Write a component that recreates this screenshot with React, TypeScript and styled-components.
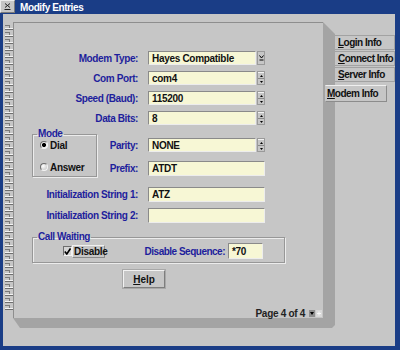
import React from "react";
import styled, { createGlobalStyle, css } from "styled-components";

const GlobalStyle = createGlobalStyle`
  html, body {
    margin: 0;
    padding: 0;
    background: #c6c6c6;
  }
  body {
    font-family: "Liberation Sans", Arial, sans-serif;
  }
`;

const Window = styled.div`
  width: 400px;
  height: 350px;
  display: flex;
  flex-direction: column;
  background: #1a3d86;
`;

const TitleBar = styled.div`
  height: 14px;
  display: flex;
  align-items: center;
  flex-shrink: 0;
`;

const MenuBox = styled.div`
  width: 15px;
  height: 13px;
  box-sizing: border-box;
  background: #c6c6c6;
  border: 1px solid;
  border-color: #ececec #7a7a7a #7a7a7a #ececec;
  display: flex;
  align-items: center;
  justify-content: center;
  align-self: flex-start;
`;

const Title = styled.div`
  margin-left: 5px;
  color: #ffffff;
  font-size: 10px;
  font-weight: bold;
  letter-spacing: -0.4px;
`;

const Frame = styled.div`
  flex: 1;
  display: flex;
  padding: 0 5px 4px 3px;
`;

const Body = styled.div`
  flex: 1;
  display: flex;
  align-items: flex-start;
  background: #c6c6c6;
  padding-top: 8px;
`;

const Spiral = styled.svg`
  width: 10px;
  height: 288px;
  margin-top: 3px;
  flex-shrink: 0;
`;

const Stack = styled.div`
  width: 322px;
  height: 306px;
  flex-shrink: 0;
  background: #a4a4a4;
  clip-path: polygon(0 0, 310px 0, 322px 12px, 322px 303px, 319px 306px, 7px 306px, 0 296px);
`;

const Page = styled.div`
  width: 310px;
  height: 296px;
  box-sizing: border-box;
  border-top: 1px solid #8e8e8e;
  border-left: 1px solid #8e8e8e;
  background: #c6c6c6;
  display: flex;
  flex-direction: column;
  padding-top: 28px;
`;

const Tabs = styled.div`
  display: flex;
  flex-direction: column;
  padding-top: 13px;
  gap: 1px;
`;

const Tab = styled.div<{ $active?: boolean }>`
  width: 61px;
  height: 15px;
  box-sizing: border-box;
  margin-left: -1px;
  padding-left: 3px;
  display: flex;
  align-items: center;
  white-space: nowrap;
  overflow: hidden;
  font-size: 10px;
  font-weight: bold;
  letter-spacing: -0.5px;
  color: #111;
  background: #c6c6c6;
  border: 1px solid #a2a2a2;
  border-left-color: #ececec;

  ${p => p.$active && css`
    position: relative;
    width: 62px;
    height: 17px;
    margin: 2px 0 0 -10px;
    padding-left: 1px;
    border-color: #efefef #8c8c8c #8c8c8c transparent;
  `}
`;

const Key = styled.span`
  text-decoration: underline;
  text-underline-offset: 1px;
`;

const Rows = styled.div`
  display: flex;
  flex-direction: column;
  gap: 6px;
`;

const Row = styled.div<{ $h?: number; $top?: number }>`
  display: flex;
  align-items: center;
  height: ${p => p.$h ?? 14}px;
  margin-top: ${p => p.$top ?? 0}px;
`;

const Label = styled.div<{ $w: number }>`
  width: ${p => p.$w}px;
  margin-right: 10px;
  text-align: right;
  white-space: nowrap;
  font-size: 10px;
  font-weight: bold;
  letter-spacing: -0.4px;
  color: #1e1e9c;
`;

const Field = styled.div<{ $w: number }>`
  width: ${p => p.$w}px;
  height: 100%;
  box-sizing: border-box;
  padding-left: 3px;
  display: flex;
  align-items: center;
  background: #f7f7d5;
  border: 1px solid;
  border-color: #8a8a8a #ededed #ededed #8a8a8a;
  font-size: 10px;
  font-weight: bold;
  letter-spacing: -0.3px;
  color: #111;
`;

const SideButton = styled.div`
  width: 8px;
  height: 100%;
  margin-left: 1px;
  box-sizing: border-box;
  display: flex;
  flex-direction: column;
  background: #c6c6c6;
  border: 1px solid #9a9a9a;
`;

const SpinCell = styled.div`
  flex: 1;
  display: flex;
  align-items: center;
  justify-content: center;
  border-top: 1px solid #f2f2f2;
  & + & {
    border-top: 1px solid #8a8a8a;
  }
`;

const ComboCell = styled.div`
  flex: 1;
  display: flex;
  align-items: center;
  justify-content: center;
`;

const Middle = styled.div`
  display: flex;
  align-items: flex-start;
  margin-top: 4px;
`;

const Group = styled.fieldset<{ $w: number; $top?: number }>`
  width: ${p => p.$w}px;
  box-sizing: border-box;
  margin: ${p => p.$top ?? 0}px 0 0 18px;
  padding: 0 0 3px 4px;
  border: 1px solid #979797;
  box-shadow: 1px 1px 0 #ececec, inset 1px 1px 0 #ececec;
  min-inline-size: 0;
`;

const Legend = styled.legend`
  padding: 0 1px;
  line-height: 10px;
  font-size: 10px;
  font-weight: bold;
  letter-spacing: -0.4px;
  color: #1e1e9c;
`;

const RadioRow = styled.div<{ $top?: number }>`
  display: flex;
  align-items: center;
  gap: 2px;
  height: 12px;
  margin: ${p => p.$top ?? 0}px 0 0 3px;
  font-size: 10px;
  font-weight: bold;
  letter-spacing: -0.3px;
  color: #111;
`;

const Radio = styled.div<{ $on?: boolean }>`
  width: 8px;
  height: 8px;
  box-sizing: border-box;
  border-radius: 50%;
  border: 1px solid;
  border-color: #6e6e6e #f4f4f4 #f4f4f4 #6e6e6e;
  background: ${p => (p.$on ? "radial-gradient(circle, #000 0 1.8px, #eaeaea 2.3px)" : "radial-gradient(circle at 35% 35%, #ffffff, #bdbdbd)")};
`;

const RightCol = styled.div`
  display: flex;
  flex-direction: column;
`;

const WaitRow = styled.div`
  display: flex;
  align-items: center;
  height: 16px;
  padding-top: 1px;
`;

const CheckBox = styled.div`
  width: 9px;
  height: 10px;
  margin-left: 26px;
  box-sizing: border-box;
  border: 1px solid;
  border-color: #6e6e6e #f2f2f2 #f2f2f2 #6e6e6e;
  background: #d4d4d4;
  display: flex;
  align-items: center;
  justify-content: center;
`;

const CheckText = styled.div`
  width: 33px;
  height: 13px;
  box-sizing: border-box;
  display: flex;
  align-items: center;
  padding-left: 1px;
  border: 1px solid;
  border-color: #f0f0f0 #8a8a8a #8a8a8a #f0f0f0;
  font-size: 10px;
  font-weight: bold;
  letter-spacing: -0.3px;
  color: #111;
`;

const SeqLabel = styled.div`
  margin-left: auto;
  margin-right: 3px;
  font-size: 10px;
  font-weight: bold;
  letter-spacing: -0.5px;
  color: #1e1e9c;
  white-space: nowrap;
`;

const Button = styled.div`
  width: 42px;
  height: 18px;
  box-sizing: border-box;
  margin: 7px 0 0 109px;
  display: flex;
  align-items: center;
  justify-content: center;
  border: 1px solid;
  border-color: #f2f2f2 #7e7e7e #7e7e7e #f2f2f2;
  box-shadow: 0 0 0 1px #a8a8a8;
  font-size: 10px;
  font-weight: bold;
  color: #111;
`;

const Footer = styled.div`
  margin-top: auto;
  height: 10px;
  display: flex;
  align-items: center;
  justify-content: flex-end;
  padding-right: 1px;
  font-size: 10px;
  font-weight: bold;
  letter-spacing: -0.3px;
  color: #222;
`;

const Nav = styled.svg`
  width: 13px;
  height: 7px;
  margin-left: 4px;
`;

const Up = () => (
  <svg width="3" height="2" viewBox="0 0 3 2"><path d="M1.5 0 L3 2 L0 2 Z" fill="#000" /></svg>
);
const Down = () => (
  <svg width="3" height="2" viewBox="0 0 3 2"><path d="M0 0 L3 0 L1.5 2 Z" fill="#000" /></svg>
);

const Spin = () => (
  <SideButton>
    <SpinCell><Up /></SpinCell>
    <SpinCell><Down /></SpinCell>
  </SideButton>
);

const Combo = () => (
  <SideButton>
    <ComboCell>
      <svg width="5" height="6" viewBox="0 0 5 6">
        <path d="M0.5 0.5 L2.5 3 L4.5 0.5" stroke="#000" strokeWidth="1" fill="none" />
        <path d="M0.5 5 H4.5" stroke="#000" strokeWidth="1" />
      </svg>
    </ComboCell>
  </SideButton>
);

const coils = Array.from({ length: 41 }, (_, i) => i * 7);

export default function App() {
  return (
    <>
      <GlobalStyle />
      <Window>
        <TitleBar>
          <MenuBox>
            <svg width="7" height="7" viewBox="0 0 7 7">
              <path d="M1 0.5 L6 4.5 M6 0.5 L1 4.5" stroke="#222" strokeWidth="1" />
              <path d="M0.5 6.5 H6.5" stroke="#222" strokeWidth="1" />
            </svg>
          </MenuBox>
          <Title>Modify Entries</Title>
        </TitleBar>
        <Frame>
          <Body>
            <Spiral viewBox="0 0 10 288">
              {coils.map(y => (
                <g key={y}>
                  <path d={`M2 ${y + 0.5} H6`} stroke="#7a7a7a" strokeWidth="1" />
                  <path d={`M6.5 ${y} V${y + 3}`} stroke="#7a7a7a" strokeWidth="1" />
                  <path d={`M2 ${y + 3.5} H10`} stroke="#f4f4f4" strokeWidth="1" />
                  <path d={`M2 ${y + 4.5} H10`} stroke="#6e6e6e" strokeWidth="1" />
                </g>
              ))}
            </Spiral>
            <Stack>
              <Page>
                <Rows>
                  <Row>
                    <Label $w={124}>Modem Type:</Label>
                    <Field $w={108}>Hayes Compatible</Field>
                    <Combo />
                  </Row>
                  <Row>
                    <Label $w={124}>Com Port:</Label>
                    <Field $w={108}>com4</Field>
                    <Spin />
                  </Row>
                  <Row>
                    <Label $w={124}>Speed (Baud):</Label>
                    <Field $w={108}>115200</Field>
                    <Spin />
                  </Row>
                  <Row>
                    <Label $w={124}>Data Bits:</Label>
                    <Field $w={108}>8</Field>
                    <Spin />
                  </Row>
                </Rows>

                <Middle>
                  <Group $w={65}>
                    <Legend>Mode</Legend>
                    <RadioRow>
                      <Radio $on />
                      Dial
                    </RadioRow>
                    <RadioRow $top={10}>
                      <Radio />
                      Answer
                    </RadioRow>
                  </Group>
                  <RightCol>
                    <Row $top={9}>
                      <Label $w={41}>Parity:</Label>
                      <Field $w={108}>NONE</Field>
                      <Spin />
                    </Row>
                    <Row $top={9} $h={15}>
                      <Label $w={41}>Prefix:</Label>
                      <Field $w={117}>ATDT</Field>
                    </Row>
                  </RightCol>
                </Middle>

                <Row $top={10} $h={15}>
                  <Label $w={124}>Initialization String 1:</Label>
                  <Field $w={117}>ATZ</Field>
                </Row>
                <Row $top={6} $h={15}>
                  <Label $w={124}>Initialization String 2:</Label>
                  <Field $w={117} />
                </Row>

                <Group $w={253} $top={9}>
                  <Legend>Call Waiting</Legend>
                  <WaitRow>
                    <CheckBox>
                      <svg width="7" height="7" viewBox="0 0 7 7">
                        <path d="M0.8 3.5 L2.8 6 L6.5 0.5" stroke="#000" strokeWidth="1.6" fill="none" />
                      </svg>
                    </CheckBox>
                    <CheckText>Disable</CheckText>
                    <SeqLabel>Disable Sequence:</SeqLabel>
                    <Field $w={35} style={{ marginRight: 21 }}>*70</Field>
                  </WaitRow>
                </Group>

                <Button>
                  <Key>H</Key>elp
                </Button>

                <Footer>
                  Page 4 of 4
                  <Nav viewBox="0 0 13 7">
                    <rect x="0" y="0" width="6" height="7" fill="#8e8e8e" />
                    <path d="M1 2 H5 L3 5 Z" fill="#000" />
                    <rect x="7" y="0" width="6" height="7" fill="#d9d9d9" />
                    <path d="M10 1.5 V5.5 M8 3.5 H12" stroke="#f8f8f8" strokeWidth="1" />
                  </Nav>
                </Footer>
              </Page>
            </Stack>
            <Tabs>
              <Tab><span><Key>L</Key>ogin Info</span></Tab>
              <Tab><span><Key>C</Key>onnect Info</span></Tab>
              <Tab><span><Key>S</Key>erver Info</span></Tab>
              <Tab $active><span><Key>M</Key>odem Info</span></Tab>
            </Tabs>
          </Body>
        </Frame>
      </Window>
    </>
  );
}
